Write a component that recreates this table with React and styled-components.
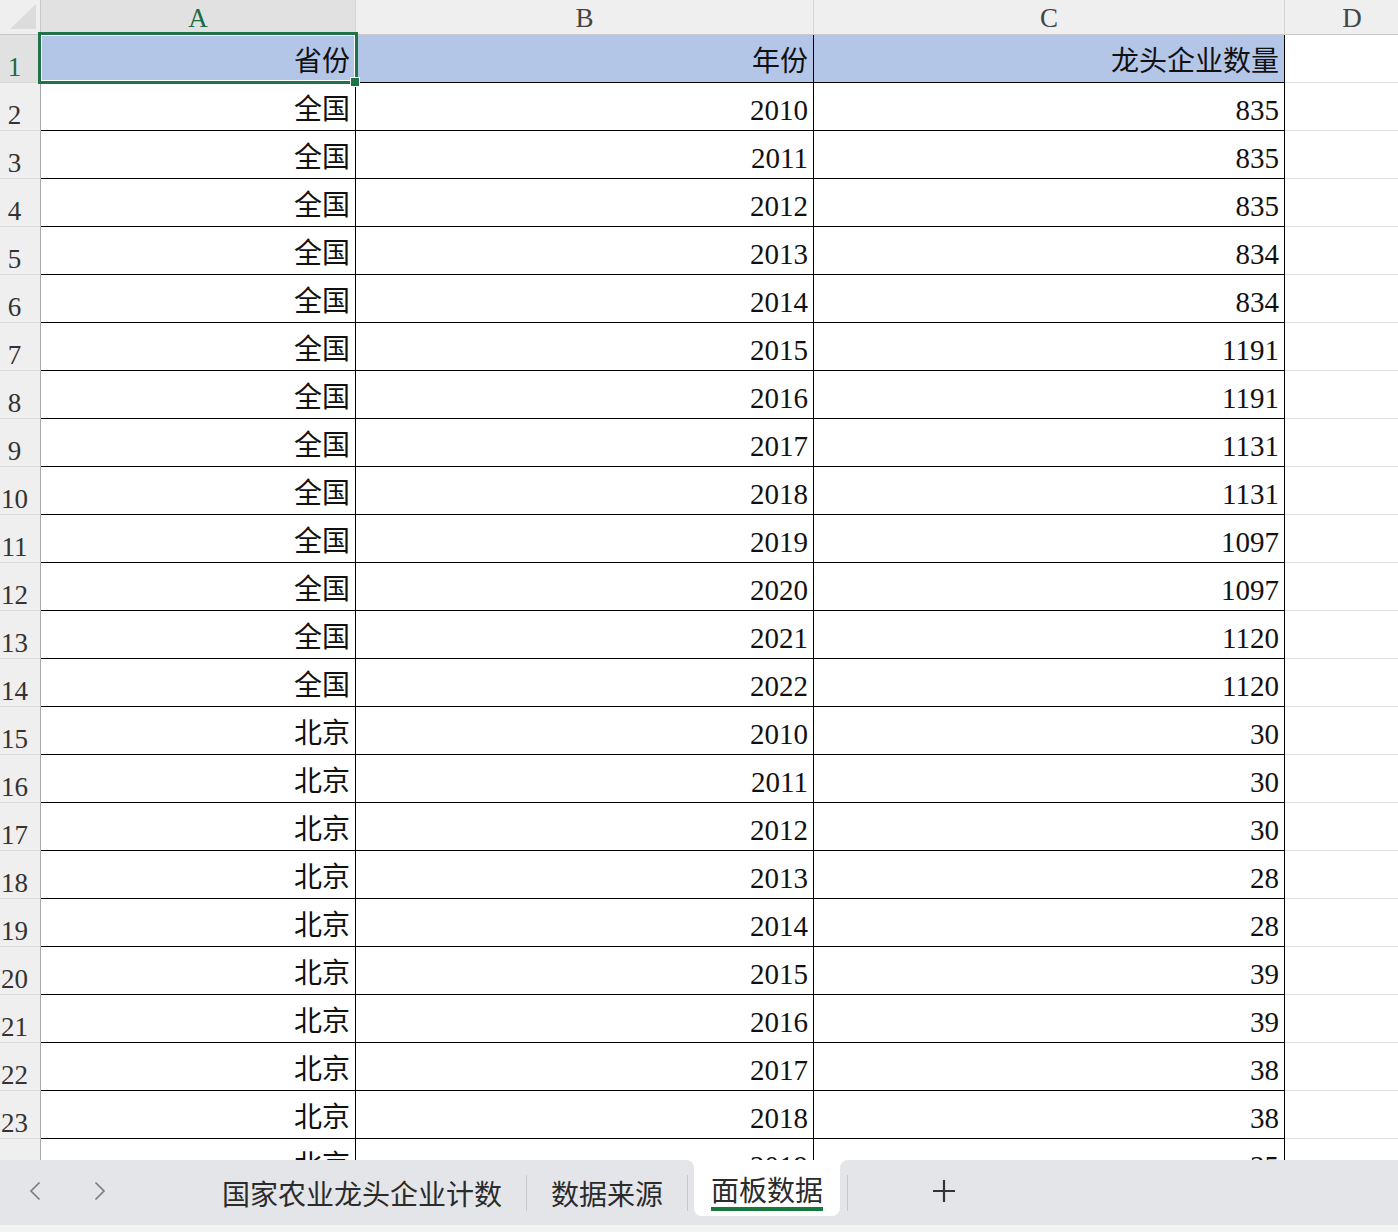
import React from 'react';
import styled, { createGlobalStyle } from 'styled-components';

const GlobalStyle = createGlobalStyle`
  *, *::before, *::after { box-sizing: border-box; }
  html, body { margin: 0; padding: 0; background: #fff; overflow: hidden; }
  #root { width: 1398px; height: 1232px; }
`;

const GRAY = '#e4e5e8';

const Page = styled.div`
  width: 1398px;
  height: 1232px;
  display: flex;
  flex-direction: column;
  overflow: hidden;
  font-family: "Liberation Serif", "Noto Sans CJK SC", serif;
`;

const Sheet = styled.div`
  position: relative;
  flex: none;
  height: 1160px;
  overflow: hidden;
`;

const Grid = styled.div`
  display: grid;
  grid-template-columns: 41px 315px 458px 471px 135px;
  grid-template-rows: 35px;
  grid-auto-rows: 48px;
  width: 1420px;
`;

const Corner = styled.div`
  background: #efefef;
  border-right: 1px solid #c9c9c9;
  border-bottom: 1px solid #c9c9c9;
  display: flex;
  align-items: flex-end;
  justify-content: flex-end;
  padding: 0 3px 4px 0;
`;

const ColHeader = styled.div`
  background: ${(p) => (p.$active ? '#e1e1e1' : '#efefef')};
  color: ${(p) => (p.$active ? '#1d6b43' : '#444')};
  border-right: 1px solid #d5d5d5;
  border-bottom: 1px solid #c9c9c9;
  display: flex;
  justify-content: center;
  align-items: flex-end;
  font-size: 27px;
  line-height: 27px;
  padding-bottom: 2px;
`;

const RowHeader = styled.div`
  background: ${(p) => (p.$active ? '#e1e1e1' : '#efefef')};
  color: ${(p) => (p.$active ? '#1d6b43' : '#333')};
  border-right: 1px solid #a8a8a8;
  border-bottom: 1px solid #d9d9d9;
  display: flex;
  align-items: flex-end;
  font-size: 27px;
  line-height: 27px;
  padding-bottom: 1px;
  white-space: nowrap;
`;

const RowNum = styled.span`
  display: block;
  width: 29px;
  text-align: center;
`;

const Cell = styled.div`
  background: ${(p) => (p.$head ? '#b4c6e7' : '#fff')};
  border-right: 1px solid ${(p) => (p.$plain ? '#e1e1e1' : '#000')};
  border-bottom: 1px solid ${(p) => (p.$plain ? '#e1e1e1' : '#000')};
  display: flex;
  justify-content: flex-end;
  align-items: flex-end;
  padding: 0 5px ${(p) => (p.$num ? '6px' : '6px')} 0;
  font-size: ${(p) => (p.$num ? '29px' : '28px')};
  line-height: 28px;
  color: #111;
  white-space: nowrap;
`;

const Selection = styled.div`
  position: absolute;
  left: 38px;
  top: 32px;
  width: 320px;
  height: 52px;
  border: 3px solid #1f7346;
  box-shadow: inset 0 0 0 1px #fff;
  pointer-events: none;
`;

const FillHandle = styled.div`
  position: absolute;
  left: 310px;
  top: 43px;
  width: 8px;
  height: 8px;
  background: #1f7346;
  box-shadow: 0 0 0 1px #fff;
`;

const TabBar = styled.div`
  flex: none;
  height: 65px;
  display: flex;
  font-family: "Noto Sans CJK SC", "Noto Sans", sans-serif;
  color: #2b2b2b;
`;

const Segment = styled.div`
  display: flex;
  align-items: center;
  background: ${GRAY};
  width: ${(p) => (p.$width ? `${p.$width}px` : 'auto')};
  flex: ${(p) => (p.$grow ? 1 : 'none')};
  border-top-right-radius: ${(p) => (p.$roundRight ? '8px' : '0')};
  border-top-left-radius: ${(p) => (p.$roundLeft ? '8px' : '0')};
`;

const Nav = styled.div`
  width: 198px;
  display: flex;
  align-items: center;
  gap: 53px;
  padding-left: 29px;
  padding-bottom: 3px;
`;

const Tab = styled.div`
  padding: 0 24px;
  font-size: 28px;
  line-height: 28px;
  white-space: nowrap;
`;

const Separator = styled.div`
  flex: none;
  width: 1px;
  height: 36px;
  background: #c7c8cb;
  margin-left: ${(p) => p.$ml || 0}px;
`;

const ActiveSlot = styled.div`
  flex: none;
  width: 146px;
  background: linear-gradient(to bottom, transparent 0, transparent 50%, ${GRAY} 50%);
  padding-top: 1px;
`;

const ActiveTab = styled.div`
  height: 55px;
  background: #fff;
  border-radius: 8px;
  display: flex;
  flex-direction: column;
  align-items: center;
  padding-top: 14px;
  font-size: 28px;
  line-height: 28px;
  white-space: nowrap;
`;

const Underline = styled.div`
  width: 112px;
  height: 4px;
  margin-top: 4px;
  background: #167a3f;
`;

const PlusButton = styled.div`
  margin-left: 84px;
  width: 24px;
  height: 24px;
  display: flex;
  align-items: center;
  justify-content: center;
  margin-bottom: 3px;
`;

const BottomStrip = styled.div`
  flex: none;
  height: 7px;
  background: #f3f3f3;
`;

const national = [835, 835, 835, 834, 834, 1191, 1191, 1131, 1131, 1097, 1097, 1120, 1120];
const beijing = [30, 30, 30, 28, 28, 39, 39, 38, 38, 35];

const rows = [
  ...national.map((v, i) => ['全国', 2010 + i, v]),
  ...beijing.map((v, i) => ['北京', 2010 + i, v]),
];

const Chevron = ({ dir }) => (
  <svg width="12" height="20" viewBox="0 0 12 20">
    <path
      d={dir === 'left' ? 'M10.5 1.5 L2 10 L10.5 18.5' : 'M1.5 1.5 L10 10 L1.5 18.5'}
      fill="none"
      stroke="#7a7a7a"
      strokeWidth="1.6"
    />
  </svg>
);

export default function App() {
  return (
    <Page>
      <GlobalStyle />
      <Sheet>
        <Grid>
          <Corner>
            <svg width="28" height="26" viewBox="0 0 28 26">
              <polygon points="27,0 27,25 1,25" fill="#dcdcdc" />
            </svg>
          </Corner>
          <ColHeader $active>A</ColHeader>
          <ColHeader>B</ColHeader>
          <ColHeader>C</ColHeader>
          <ColHeader>D</ColHeader>

          <RowHeader $active><RowNum>1</RowNum></RowHeader>
          <Cell $head>省份</Cell>
          <Cell $head>年份</Cell>
          <Cell $head>龙头企业数量</Cell>
          <Cell $plain />

          {rows.map(([p, y, v], i) => (
            <React.Fragment key={i}>
              <RowHeader><RowNum>{i + 2}</RowNum></RowHeader>
              <Cell>{p}</Cell>
              <Cell $num>{y}</Cell>
              <Cell $num>{v}</Cell>
              <Cell $plain />
            </React.Fragment>
          ))}
        </Grid>
        <Selection>
          <FillHandle />
        </Selection>
      </Sheet>

      <TabBar>
        <Segment $width={694} $roundRight>
          <Nav>
            <Chevron dir="left" />
            <Chevron dir="right" />
          </Nav>
          <Tab>国家农业龙头企业计数</Tab>
          <Separator />
          <Tab>数据来源</Tab>
          <Separator />
        </Segment>
        <ActiveSlot>
          <ActiveTab>
            面板数据
            <Underline />
          </ActiveTab>
        </ActiveSlot>
        <Segment $grow $roundLeft>
          <Separator $ml={7} />
          <PlusButton>
            <svg width="24" height="24" viewBox="0 0 24 24">
              <path d="M12 1 V23 M1 12 H23" stroke="#333" strokeWidth="2.2" fill="none" />
            </svg>
          </PlusButton>
        </Segment>
      </TabBar>
      <BottomStrip />
    </Page>
  );
}
